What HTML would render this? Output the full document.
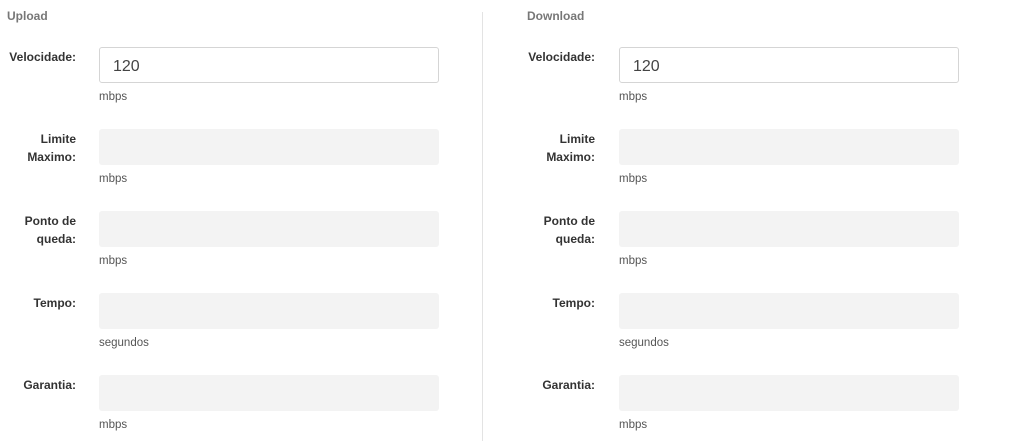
<!DOCTYPE html><html><head><style>
body{margin:0;width:1027px;height:444px;background:#fff;font-family:"Liberation Sans",sans-serif;position:relative;overflow:hidden}
.t{position:absolute;top:9px;font-size:12px;font-weight:bold;color:#777}
.l{position:absolute;width:76px;text-align:right;font-size:12px;font-weight:bold;color:#333;line-height:18px}
.i{position:absolute;width:340px;height:36px;background:#f3f3f3;border-radius:3px;box-sizing:border-box}
.i.w{background:#fff;border:1px solid #d5d5d5;font-size:16px;color:#444;padding:10px 0 0 13px}
.u{position:absolute;font-size:11.5px;color:#555}
.d{position:absolute;left:482px;top:12px;width:1px;height:429px;background:#e3e3e3}
</style></head><body>
<div class="d"></div>
<div class="t" style="left:7px">Upload</div>
<div class="t" style="left:527px">Download</div>
<div id="c"></div>
<script>
var labels=[["Velocidade:","mbps"],["Limite<br>Maximo:","mbps"],["Ponto de<br>queda:","mbps"],["Tempo:","segundos"],["Garantia:","mbps"]];
var h="";
[[0,99],[519,619]].forEach(function(c){
labels.forEach(function(L,k){var y=47+82*k;
h+='<div class="l" style="left:'+c[0]+'px;top:'+(y+1)+'px">'+L[0]+'</div>';
h+='<div class="i'+(k==0?' w':'')+'" style="left:'+c[1]+'px;top:'+y+'px">'+(k==0?'120':'')+'</div>';
h+='<div class="u" style="left:'+c[1]+'px;top:'+(y+44)+'px">'+L[1]+'</div>';});});
document.getElementById("c").innerHTML=h;
</script>
</body></html>
